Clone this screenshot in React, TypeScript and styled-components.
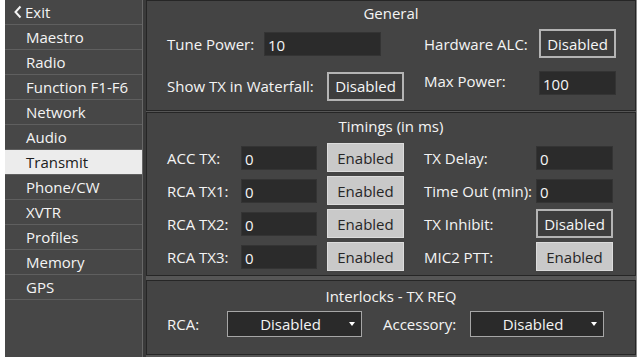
import * as React from 'react'
import styled, { createGlobalStyle } from 'styled-components'

const GlobalStyle = createGlobalStyle`
    html, body {
        margin: 0;
        padding: 0;
        background: #ffffff;
    }
    body {
        font-family: 'Open Sans', 'Noto Sans', sans-serif;
    }
`

const menu = [
    'Maestro',
    'Radio',
    'Function F1-F6',
    'Network',
    'Audio',
    'Transmit',
    'Phone/CW',
    'XVTR',
    'Profiles',
    'Memory',
    'GPS'
]

const Shell = styled.div`
    display: flex;
    margin-left: 5px;
    width: 632px;
    height: 357px;
    background: #3a3a3a;
`

const Sidebar = styled.div`
    width: 137px;
    background: #474747;
    border-right: 1px solid #686868;
    display: flex;
    flex-direction: column;
`

const MenuItem = styled.div<{ $active?: boolean }>`
    height: 24px;
    border-bottom: 1px solid #5f5f5f;
    display: flex;
    align-items: center;
    padding-left: 21px;
    font-size: 15px;
    color: ${(p) => (p.$active ? '#202020' : '#f4f4f4')};
    background: ${(p) => (p.$active ? '#ececec' : 'transparent')};
`

const ExitItem = styled(MenuItem)`
    padding-left: 9px;
    gap: 3px;
`

const Main = styled.div`
    flex: 1;
    margin-left: 3px;
    display: flex;
    flex-direction: column;
    background: #565656;
    border-right: 1px solid #8a8a8a;
`

const Section = styled.div<{ $height: number; $mt?: number }>`
    height: ${(p) => p.$height}px;
    margin-top: ${(p) => p.$mt || 0}px;
    box-sizing: border-box;
    background: #444444;
    border: 1px solid #262626;
    display: flex;
    flex-direction: column;
    padding: 0 0 0 20px;
`

const Title = styled.div<{ $pt?: number }>`
    height: 24px;
    line-height: 24px;
    margin-top: ${(p) => p.$pt || 0}px;
    margin-left: -20px;
    text-align: center;
    font-size: 15px;
    color: #f4f4f4;
`

const Row = styled.div<{ $height: number; $mt?: number }>`
    display: grid;
    grid-template-columns: 257px 1fr;
    align-items: center;
    height: ${(p) => p.$height}px;
    margin-top: ${(p) => p.$mt || 0}px;
`

const Field = styled.div<{ $top?: boolean }>`
    display: flex;
    align-items: center;
    align-self: ${(p) => (p.$top ? 'start' : 'center')};
`

const Label = styled.div<{ $w: number; $dy?: number; $ml?: number }>`
    width: ${(p) => p.$w}px;
    flex: none;
    margin-left: ${(p) => p.$ml || 0}px;
    font-size: 15px;
    color: #f4f4f4;
    white-space: nowrap;
    position: relative;
    top: ${(p) => p.$dy || 0}px;
`

const TextBox = styled.div<{ $w: number }>`
    width: ${(p) => p.$w}px;
    height: 24px;
    box-sizing: border-box;
    background: #2b2b2b;
    border: 1px solid #343434;
    padding-left: 3px;
    font-size: 15px;
    line-height: 24px;
    color: #f6f6f6;
`

const Toggle = styled.div<{ $on?: boolean; $ml?: number }>`
    width: 77px;
    height: 29px;
    box-sizing: border-box;
    margin-left: ${(p) => p.$ml || 0}px;
    display: flex;
    align-items: center;
    justify-content: center;
    font-size: 15px;
    background: ${(p) => (p.$on ? '#c9c9c9' : '#3d3d3d')};
    color: ${(p) => (p.$on ? '#262626' : '#f6f6f6')};
    border: ${(p) => (p.$on ? '1px solid #dcdcdc' : '2px solid #b4b4b4')};
`

const Select = styled.div<{ $w: number }>`
    width: ${(p) => p.$w}px;
    height: 26px;
    box-sizing: border-box;
    background: #2a2a2a;
    border: 1px solid #a6a6a6;
    display: flex;
    align-items: center;
    font-size: 15px;
    color: #f4f4f4;
`

const SelectText = styled.span`
    flex: 1;
    text-align: center;
    padding-left: 4px;
`

const Caret = styled.span`
    width: 0;
    height: 0;
    margin-right: 6px;
    border-left: 3px solid transparent;
    border-right: 3px solid transparent;
    border-top: 4px solid #ffffff;
`

const InterlockRow = styled.div`
    display: flex;
    align-items: center;
    height: 27px;
    margin-top: 2px;
`

const Chevron = () => (
    <svg width="8" height="14" viewBox="0 0 8 14">
        <polyline points="6.5,1.5 1.5,7 6.5,12.5" fill="none" stroke="#f4f4f4" strokeWidth="2" />
    </svg>
)

const timings = [
    { left: 'ACC TX:', right: 'TX Delay:', kind: 'text', on: false },
    { left: 'RCA TX1:', right: 'Time Out (min):', kind: 'text', on: false },
    { left: 'RCA TX2:', right: 'TX Inhibit:', kind: 'toggle', on: false },
    { left: 'RCA TX3:', right: 'MIC2 PTT:', kind: 'toggle', on: true }
]

const App: React.FC = () => (
    <>
        <GlobalStyle />
        <Shell>
            <Sidebar>
                <ExitItem>
                    <Chevron />
                    Exit
                </ExitItem>
                {menu.map((item) => (
                    <MenuItem key={item} $active={item === 'Transmit'}>
                        {item}
                    </MenuItem>
                ))}
            </Sidebar>
            <Main>
                <Section $height={111}>
                    <Title>General</Title>
                    <Row $height={29} $mt={4}>
                        <Field>
                            <Label $w={97}>Tune Power:</Label>
                            <TextBox $w={117}>10</TextBox>
                        </Field>
                        <Field>
                            <Label $w={115}>Hardware ALC:</Label>
                            <Toggle>Disabled</Toggle>
                        </Field>
                    </Row>
                    <Row $height={30} $mt={13}>
                        <Field>
                            <Label $w={160}>Show TX in Waterfall:</Label>
                            <Toggle>Disabled</Toggle>
                        </Field>
                        <Field $top>
                            <Label $w={115} $dy={-2}>
                                Max Power:
                            </Label>
                            <TextBox $w={77}>100</TextBox>
                        </Field>
                    </Row>
                </Section>
                <Section $height={164} $mt={1}>
                    <Title $pt={1}>Timings (in ms)</Title>
                    {timings.map((t, i) => (
                        <Row key={t.left} $height={29} $mt={i === 0 ? 5 : 4}>
                            <Field>
                                <Label $w={74}>{t.left}</Label>
                                <TextBox $w={76}>0</TextBox>
                                <Toggle $on $ml={10}>
                                    Enabled
                                </Toggle>
                            </Field>
                            <Field>
                                <Label $w={112}>{t.right}</Label>
                                {t.kind === 'text' ? (
                                    <TextBox $w={77}>0</TextBox>
                                ) : (
                                    <Toggle $on={t.on}>{t.on ? 'Enabled' : 'Disabled'}</Toggle>
                                )}
                            </Field>
                        </Row>
                    ))}
                </Section>
                <Section $height={75} $mt={4}>
                    <Title $pt={3}>Interlocks - TX REQ</Title>
                    <InterlockRow>
                        <Label $w={60}>RCA:</Label>
                        <Select $w={135}>
                            <SelectText>Disabled</SelectText>
                            <Caret />
                        </Select>
                        <Label $w={87} $ml={21}>
                            Accessory:
                        </Label>
                        <Select $w={134}>
                            <SelectText>Disabled</SelectText>
                            <Caret />
                        </Select>
                    </InterlockRow>
                </Section>
            </Main>
        </Shell>
    </>
)

export default App
